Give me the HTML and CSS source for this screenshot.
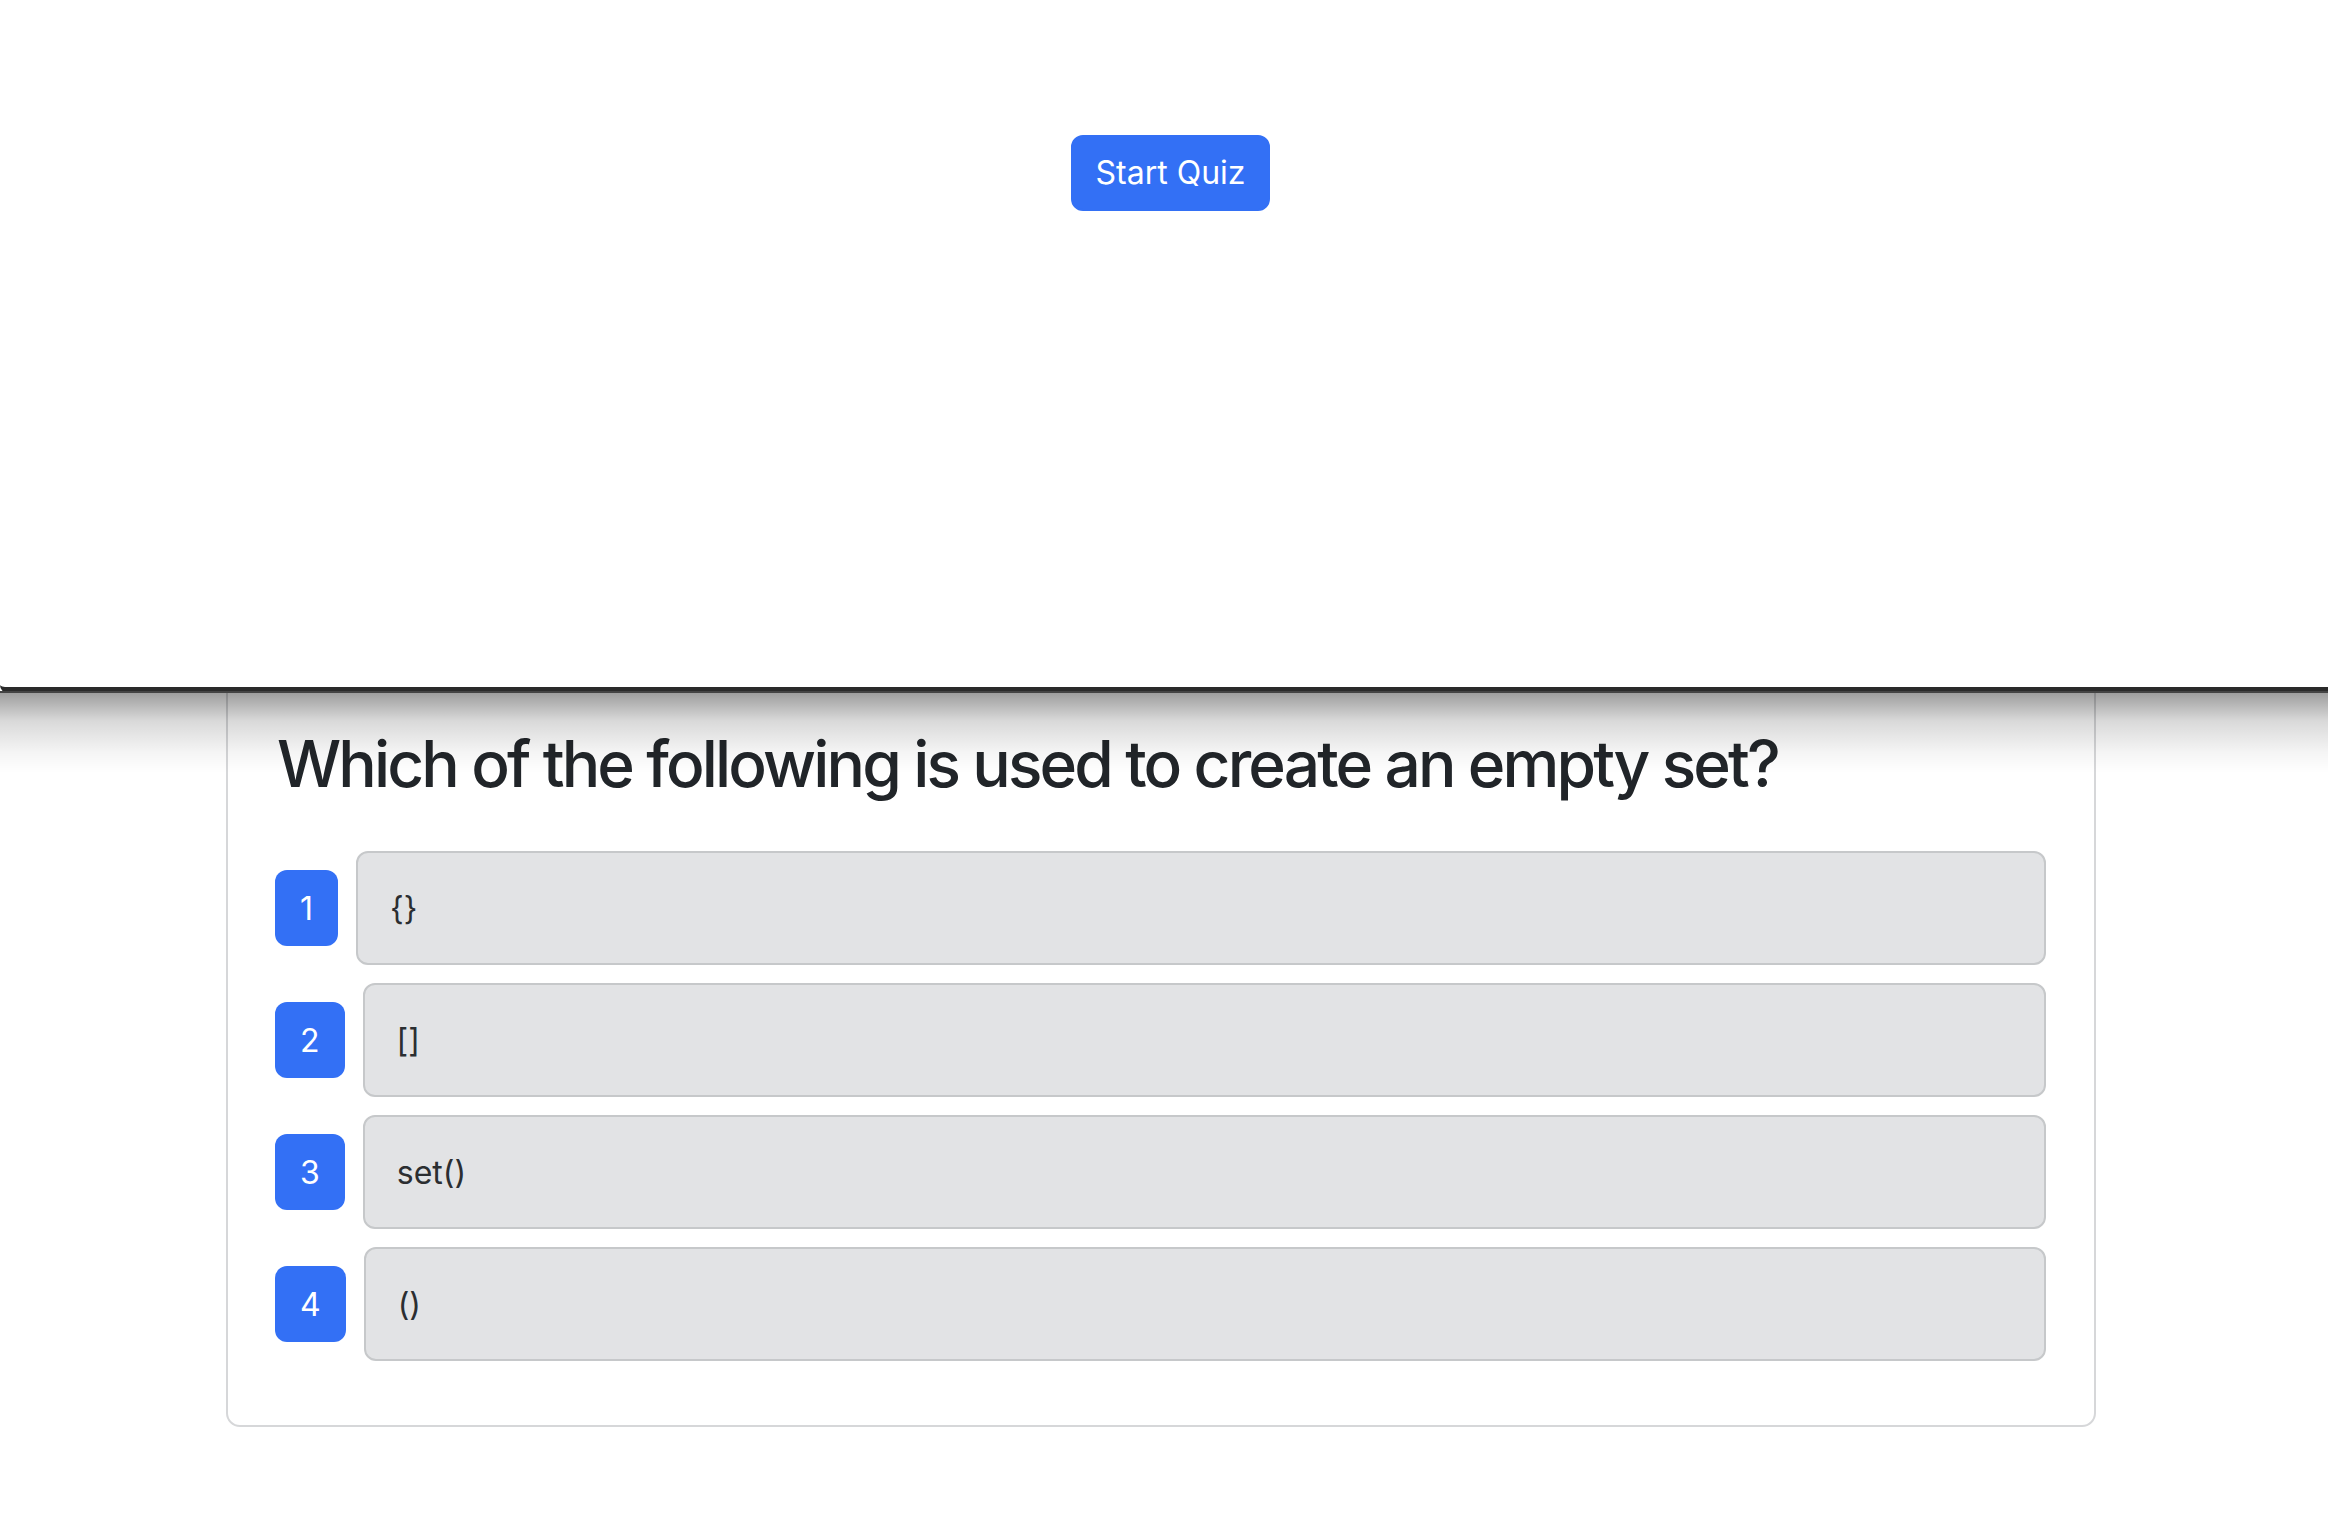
FILE: index.html
```html
<!DOCTYPE html>
<html lang="en">
<head>
<meta charset="utf-8">
<title>Quiz</title>
<link rel="stylesheet" href="styles.css">
</head>
<body>
<div class="overlay">
  <div class="overlay-inner">
    <button class="btn-start" type="button">Start Quiz</button>
  </div>
</div>
<main class="page">
  <section class="card">
    <h2 class="question">Which of the following is used to create an empty set?</h2>
    <div class="options">
      <div class="option"><span class="num">1</span><div class="answer">{}</div></div>
      <div class="option"><span class="num">2</span><div class="answer">[]</div></div>
      <div class="option"><span class="num">3</span><div class="answer">set()</div></div>
      <div class="option"><span class="num">4</span><div class="answer">()</div></div>
    </div>
  </section>
</main>
</body>
</html>
```
FILE: styles.css
```css
* { box-sizing: border-box; }
html, body {
  margin: 0;
  padding: 0;
  background: #ffffff;
  font-family: Inter, "Noto Sans", "Liberation Sans", sans-serif;
  color: #212529;
}
.overlay {
  position: absolute;
  top: 0;
  left: 0;
  right: 0;
  height: 693px;
  background: #ffffff;
  border-bottom: 6px solid #2a2a2a;
  border-bottom-left-radius: 8px;
  z-index: 5;
}
.overlay::before {
  content: "";
  position: absolute;
  left: 0;
  right: 0;
  bottom: 0;
  height: 2px;
  background: #444;
  transform: translateY(6px);
}
.overlay::after {
  content: "";
  position: absolute;
  left: 0;
  right: 0;
  top: 100%;
  margin-top: 6px;
  height: 80px;
  background: linear-gradient(to bottom, rgba(0,0,0,0.38), rgba(0,0,0,0.15) 35%, rgba(0,0,0,0.04) 75%, rgba(0,0,0,0));
}
.overlay-inner {
  display: flex;
  justify-content: center;
  padding: 135px 0 0 13px;
}
.btn-start {
  font-family: Inter, "Noto Sans", "Liberation Sans", sans-serif;
  font-size: 32px;
  line-height: 48px;
  font-weight: 400;
  color: #ffffff;
  background: #3370f5;
  border: 2px solid #3370f5;
  border-radius: 12px;
  padding: 12px 23px;
  cursor: pointer;
}
.page {
  padding: 675px 232px 100px 226px;
}
.card {
  border: 2px solid #d6d7d9;
  border-radius: 14px;
  padding: 48px 48px 64px 47px;
  background: #fff;
}
.question {
  margin: 0 0 49px 2px;
  font-size: 64px;
  line-height: 77px;
  font-weight: 500;
  color: #212529;
  letter-spacing: -2.85px;
}
.options {
  display: flex;
  flex-direction: column;
  gap: 18px;
}
.option {
  display: flex;
  align-items: center;
  gap: 18px;
}
.num {
  display: flex;
  align-items: center;
  justify-content: center;
  height: 76px;
  padding: 0 25px;
  background: #3370f5;
  color: #ffffff;
  border-radius: 12px;
  font-size: 32px;
}
.answer {
  flex: 1;
  height: 114px;
  display: flex;
  align-items: center;
  padding: 0 32px;
  background: #e2e3e5;
  border: 2px solid #c6c8ca;
  border-radius: 12px;
  font-size: 32px;
  color: #2b2e31;
}
```
